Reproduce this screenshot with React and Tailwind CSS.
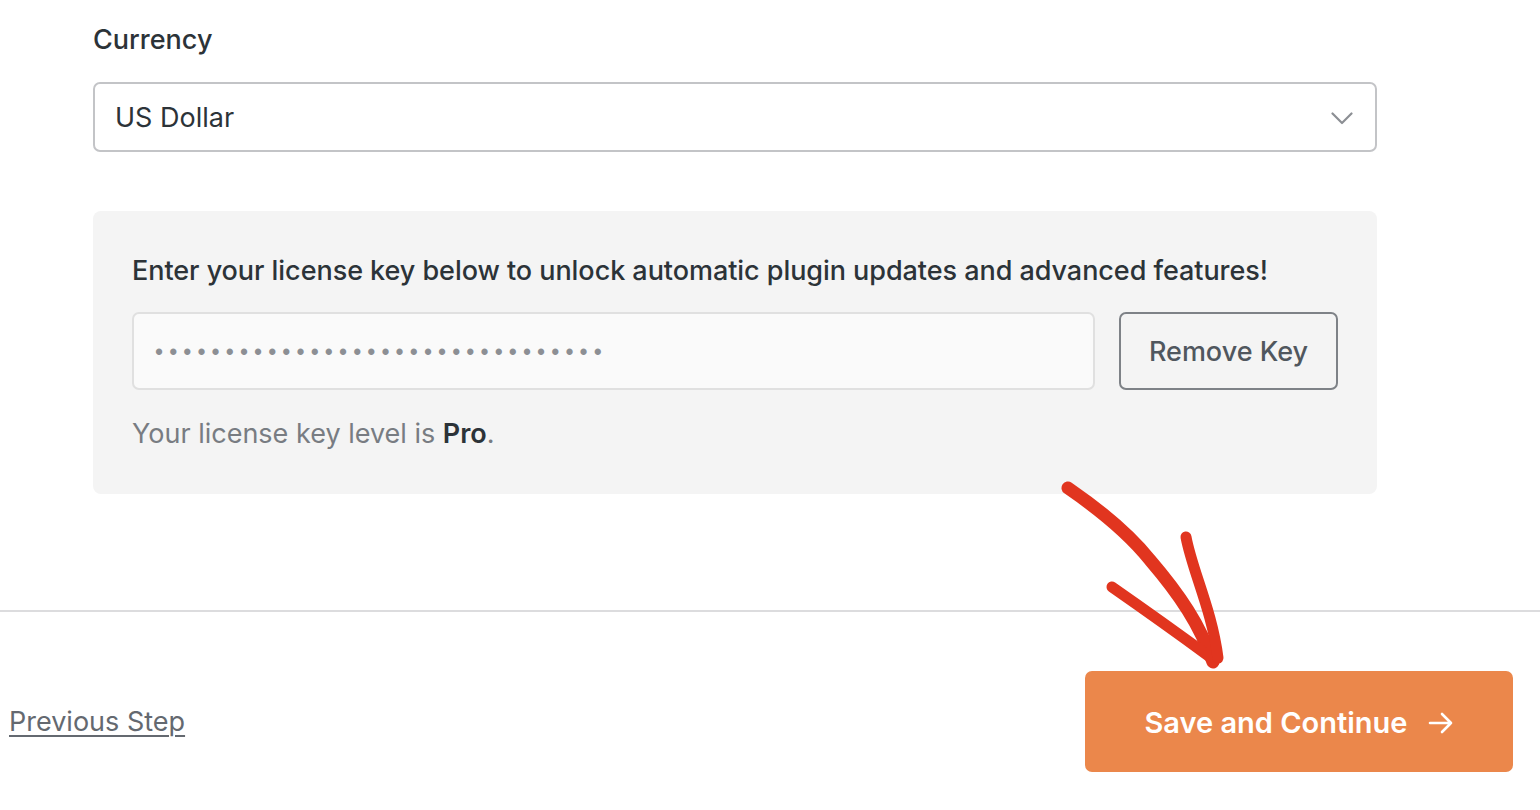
import React from 'react';

const Chevron = () => (
  <svg width="22" height="13" viewBox="0 0 22 13" fill="none">
    <path d="M1.5 1.5 L11 11 L20.5 1.5" stroke="#8c8f94" strokeWidth="2.2" strokeLinecap="round" strokeLinejoin="round" />
  </svg>
);

const ArrowRight = () => (
  <svg width="26" height="24" viewBox="0 0 26 24" fill="none">
    <path d="M2 12 H23 M14 3 L23 12 L14 21" stroke="white" strokeWidth="2.6" strokeLinecap="round" strokeLinejoin="round" />
  </svg>
);

// hand drawn red pointer arrow sitting over the footer
const HandArrow = () => (
  <svg className="absolute left-[1055px] top-[478px] pointer-events-none" width="180" height="200" viewBox="1055 478 180 200" fill="none">
    <path d="M1068 488 C1100 510 1130 535 1150 560 C1180 595 1200 625 1213 662" stroke="#e1351f" strokeWidth="13" strokeLinecap="round" />
    <path d="M1112 587 C1145 610 1180 635 1210 657" stroke="#e1351f" strokeWidth="11" strokeLinecap="round" />
    <path d="M1186 537 C1192 570 1212 610 1218 658" stroke="#e1351f" strokeWidth="11" strokeLinecap="round" />
  </svg>
);

const App = () => {
  return (
    <div className="relative w-[1540px] h-[810px] bg-white overflow-hidden font-['Inter',sans-serif] text-[#2c3338]">
      <div className="pl-[93px] pr-[163px] pt-[20px]">
        {/* Currency field */}
        <div className="text-[27px] leading-[40px] font-medium">Currency</div>
        <div className="mt-[22px] h-[70px] border-2 border-[#c3c4c7] rounded-[7px] flex items-center justify-between pl-[20px] pr-[22px] pt-[2px]">
          <span className="text-[27px]">US Dollar</span>
          <Chevron />
        </div>

        {/* License panel */}
        <div className="mt-[59px] bg-[#f4f4f4] rounded-[8px] px-[39px] pt-[40px] pb-[40px]">
          <div className="text-[27px] leading-[40px] font-medium tracking-[-0.05px]">
            Enter your license key below to unlock automatic plugin updates and advanced features!
          </div>
          <div className="mt-[21px] flex gap-[24px]">
            <div className="flex-1 h-[78px] bg-[#fafafa] border-2 border-[#e0e0e0] rounded-[7px] flex items-center pl-[21px] pt-[2px]">
              <span className="font-['Liberation_Sans',sans-serif] text-[23px] tracking-[6.1px] text-[#8c8f94]">
                ••••••••••••••••••••••••••••••••
              </span>
            </div>
            <button className="w-[219px] h-[78px] border-2 border-[#7e8287] rounded-[7px] text-[27px] font-medium text-[#50575e] pt-[2px]">
              Remove Key
            </button>
          </div>
          <div className="mt-[24px] text-[27px] leading-[40px] text-[#787c82]">
            Your license key level is <span className="font-semibold text-[#2c3338]">Pro</span>.
          </div>
        </div>
      </div>

      {/* Footer */}
      <div className="mt-[116px] border-t-2 border-[#dcdcde] flex items-center justify-between pl-[9px] pr-[27px] pt-[59px]">
        <a className="text-[27px] text-[#646970] underline underline-offset-[4px] decoration-[2px] pt-[2px]">Previous Step</a>
        <button className="w-[428px] h-[101px] bg-[#eb874b] rounded-[7px] flex items-center justify-center gap-[20px] text-white text-[29px] font-semibold pt-[2px]">
          Save and Continue
          <ArrowRight />
        </button>
      </div>

      <HandArrow />
    </div>
  );
};

export default App;
